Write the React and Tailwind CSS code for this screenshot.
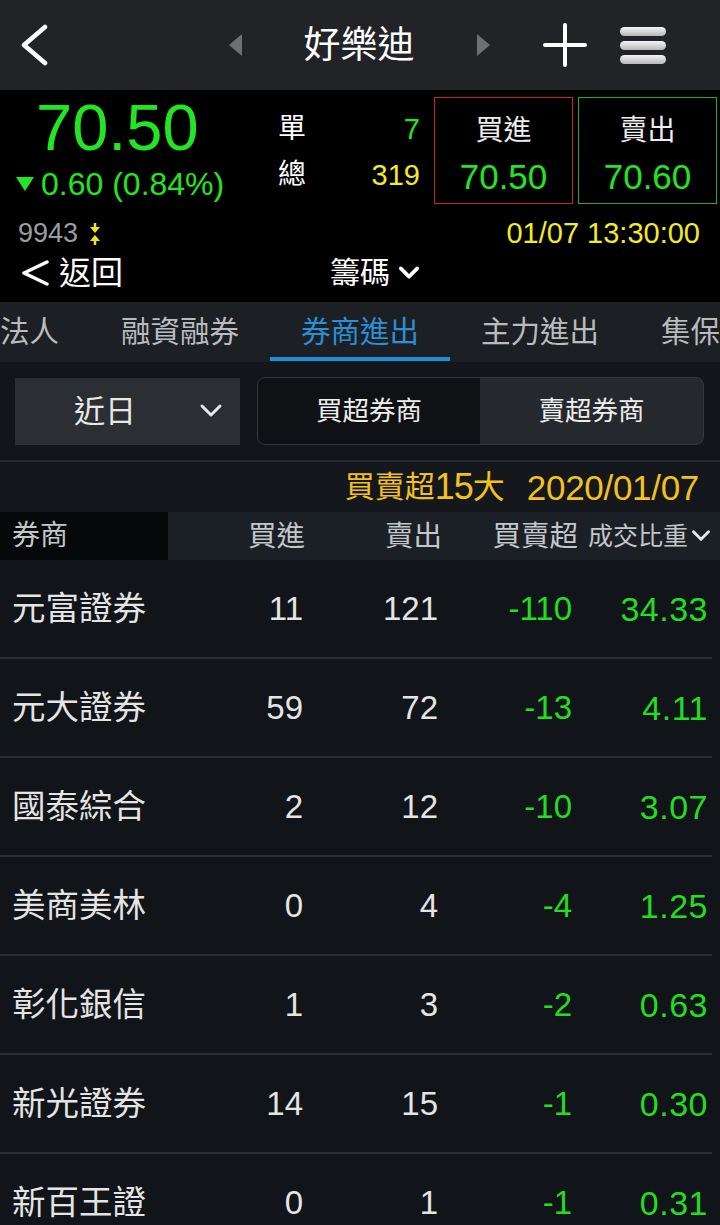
const FONT = { fontFamily: '"Liberation Sans", "Noto Sans CJK TC", sans-serif' }

const rows = [
  { name: '元富證券', buy: '11', sell: '121', net: '-110', pct: '34.33' },
  { name: '元大證券', buy: '59', sell: '72', net: '-13', pct: '4.11' },
  { name: '國泰綜合', buy: '2', sell: '12', net: '-10', pct: '3.07' },
  { name: '美商美林', buy: '0', sell: '4', net: '-4', pct: '1.25' },
  { name: '彰化銀信', buy: '1', sell: '3', net: '-2', pct: '0.63' },
  { name: '新光證券', buy: '14', sell: '15', net: '-1', pct: '0.30' },
  { name: '新百王證', buy: '0', sell: '1', net: '-1', pct: '0.31' },
]

const tabs = ['法人', '融資融券', '券商進出', '主力進出', '集保']

function Chevron({ className, stroke = 'currentColor', width = 3 }) {
  return (
    <svg viewBox="0 0 24 16" className={className} fill="none" stroke={stroke} strokeWidth={width} strokeLinecap="round" strokeLinejoin="round">
      <path d="M3 3 L12 12 L21 3" />
    </svg>
  )
}

function TopBar() {
  return (
    <div className="h-[90px] bg-[#222326] flex items-center">
      <svg viewBox="0 0 30 42" className="ml-[19px] w-[30px] h-[42px]" fill="none" stroke="#fff" strokeWidth="4.5" strokeLinecap="round" strokeLinejoin="round">
        <path d="M26 3 L5 21 L26 39" />
      </svg>
      <svg viewBox="0 0 13 22" className="ml-[180px] w-[13px] h-[22px]">
        <path d="M13 0 L0 11 L13 22 Z" fill="#6e7072" />
      </svg>
      <div className="ml-[58px] w-[118px] text-[37px] leading-none text-white text-center">好樂迪</div>
      <svg viewBox="0 0 13 22" className="ml-[59px] w-[13px] h-[22px]">
        <path d="M0 0 L13 11 L0 22 Z" fill="#6e7072" />
      </svg>
      <svg viewBox="0 0 44 44" className="ml-[53px] w-[44px] h-[44px]" fill="none" stroke="#fff" strokeWidth="4" strokeLinecap="round">
        <path d="M22 2 V42 M2 22 H42" />
      </svg>
      <div className="ml-[33px] w-[46px] flex flex-col gap-[5px]">
        <div className="h-[9px] rounded-full bg-gradient-to-b from-[#f4f4f4] to-[#b8b8b8]" />
        <div className="h-[9px] rounded-full bg-gradient-to-b from-[#f4f4f4] to-[#b8b8b8]" />
        <div className="h-[9px] rounded-full bg-gradient-to-b from-[#f4f4f4] to-[#b8b8b8]" />
      </div>
    </div>
  )
}

function Quote() {
  return (
    <div className="h-[212px] bg-black relative">
      <div className="flex">
        {/* price column */}
        <div className="w-[270px] shrink-0">
          <div className="pl-[36px] pt-[5px] text-[65px] leading-none text-[#22e622]">70.50</div>
          <div className="flex items-center pl-[16px] mt-[8px]">
            <svg viewBox="0 0 18 14" className="w-[18px] h-[14px]">
              <path d="M0 0 H18 L9 14 Z" fill="#22e622" />
            </svg>
            <span className="ml-[7px] text-[32px] leading-none text-[#22e622]">0.60 (0.84%)</span>
          </div>
          <div className="flex items-center pl-[18px] mt-[20px]">
            <span className="text-[27px] leading-none text-[#9a9da1]">9943</span>
            <svg viewBox="0 0 10 22" className="ml-[12px] w-[10px] h-[22px]">
              <path d="M5 0 V5" stroke="#f5e31c" strokeWidth="2.5" />
              <path d="M0 4 H10 L5 10 Z" fill="#f5e31c" />
              <path d="M0 18 H10 L5 12 Z" fill="#f5e31c" />
              <path d="M5 17 V22" stroke="#f5e31c" strokeWidth="2.5" />
            </svg>
          </div>
        </div>
        {/* 單 / 總 */}
        <div className="w-[150px] shrink-0 pt-[24px] pl-[8px]">
          <div className="flex items-center justify-between h-[30px]">
            <span className="text-[28px] leading-none text-white">單</span>
            <span className="text-[29px] leading-none text-[#22e622]">7</span>
          </div>
          <div className="flex items-center justify-between h-[30px] mt-[16px]">
            <span className="text-[28px] leading-none text-white">總</span>
            <span className="text-[29px] leading-none text-[#f2ea2a]">319</span>
          </div>
        </div>
        {/* buy / sell boxes */}
        <div className="flex gap-[5px] ml-[14px] pt-[7px]">
          <div className="w-[139px] h-[107px] border-[1.5px] border-[#c2262c] flex flex-col items-center">
            <span className="mt-[19px] text-[28px] leading-none text-[#eeeeee]">買進</span>
            <span className="mt-[14px] text-[35px] leading-none text-[#22e622]">70.50</span>
          </div>
          <div className="w-[139px] h-[107px] border-[1.5px] border-[#27a73c] flex flex-col items-center">
            <span className="mt-[19px] text-[28px] leading-none text-[#eeeeee]">賣出</span>
            <span className="mt-[14px] text-[35px] leading-none text-[#22e622]">70.60</span>
          </div>
        </div>
      </div>
      <div className="absolute right-[20px] top-[129px] text-[29px] leading-none text-[#f2ea2a]">01/07 13:30:00</div>
      <div className="flex items-center mt-[10px]">
        <svg viewBox="0 0 28 26" className="ml-[21px] w-[28px] h-[26px]" fill="none" stroke="#fff" strokeWidth="3.5" strokeLinecap="round" strokeLinejoin="round">
          <path d="M26 2 L3 13 L26 24" />
        </svg>
        <span className="ml-[10px] text-[32px] leading-none text-white">返回</span>
        <span className="ml-[207px] text-[30px] leading-none text-white">籌碼</span>
        <Chevron className="ml-[8px] w-[22px] h-[16px] text-white" width={4} />
      </div>
    </div>
  )
}

function Tabs() {
  return (
    <div className="h-[60px] bg-[#1c2024] overflow-hidden">
      <div className="flex -ml-[31px] h-full">
        {tabs.map((t, i) => (
          <div key={t} className="relative px-[31px] flex items-center shrink-0">
            <span className={`text-[29.5px] leading-none whitespace-nowrap ${i === 2 ? 'text-[#2a8fd6]' : 'text-[#b9bcbf]'}`}>{t}</span>
            {i === 2 && <div className="absolute left-0 right-0 bottom-[1px] h-[4px] bg-[#1f8fda]" />}
          </div>
        ))}
      </div>
    </div>
  )
}

function Filters() {
  return (
    <div className="h-[100px] bg-[#121519] flex items-center px-[15px] border-b-2 border-[#262a2e]">
      <div className="w-[225px] h-[67px] bg-[#2b2e32] flex items-center">
        <span className="ml-[59px] text-[31px] leading-none text-[#e8e8e8]">近日</span>
        <Chevron className="ml-[63px] w-[24px] h-[16px] text-[#e8e8e8]" width={3} />
      </div>
      <div className="ml-[17px] w-[447px] h-[68px] rounded-[8px] border border-[#34383c] bg-[#25292d] flex overflow-hidden">
        <div className="w-[222px] h-full bg-[#0f1114] flex items-center justify-center text-[26.5px] leading-none text-[#eeeeee]">買超券商</div>
        <div className="flex-1 h-full flex items-center justify-center text-[26.5px] leading-none text-[#eeeeee]">賣超券商</div>
      </div>
    </div>
  )
}

function Table() {
  return (
    <div className="bg-[#111418]">
      <div className="h-[50px] bg-[#14181c] flex items-center justify-end pr-[21px] text-[#f2c11d] leading-none whitespace-pre">
        <span className="text-[30px]">買賣超</span>
        <span className="text-[36px] tracking-[-1px]">15</span>
        <span className="text-[32px] mr-[22px]">大</span>
        <span className="text-[35px] tracking-[-0.3px]">2020/01/07</span>
      </div>
      <div className="h-[48px] flex items-center bg-[#1b2026] text-[#c4c7ca]">
        <div className="w-[168px] h-full bg-[#060708] flex items-center pl-[12px] text-[28px] leading-none">券商</div>
        <div className="w-[137px] text-right text-[28.5px] leading-none">買進</div>
        <div className="w-[137px] text-right text-[28.5px] leading-none">賣出</div>
        <div className="w-[136px] text-right text-[28.5px] leading-none">買賣超</div>
        <div className="ml-[10px] flex items-center">
          <span className="text-[25px] leading-none">成交比重</span>
          <Chevron className="ml-[3px] w-[20px] h-[14px] text-[#e6e6e6]" width={3.5} />
        </div>
      </div>
      {rows.map((r, i) => (
        <div key={r.name + i}>
          <div className="h-[97px] flex items-center">
            <div className="w-[168px] pl-[12px] text-[33.5px] leading-none text-[#e4e4e4]">{r.name}</div>
            <div className="w-[135px] text-right text-[33px] leading-none text-[#e4e4e4]">{r.buy}</div>
            <div className="w-[135px] text-right text-[33px] leading-none text-[#e4e4e4]">{r.sell}</div>
            <div className="w-[134px] text-right text-[33px] leading-none text-[#22dd22]">{r.net}</div>
            <div className="w-[136px] text-right text-[34px] tracking-[0.5px] leading-none text-[#22dd22]">{r.pct}</div>
          </div>
          <div className="h-[2px] w-[712px] bg-[#2a2d31]" />
        </div>
      ))}
    </div>
  )
}

export default function App() {
  return (
    <div className="w-[720px] h-[1225px] overflow-hidden bg-[#111418]" style={FONT}>
      <TopBar />
      <Quote />
      <Tabs />
      <Filters />
      <Table />
    </div>
  )
}
